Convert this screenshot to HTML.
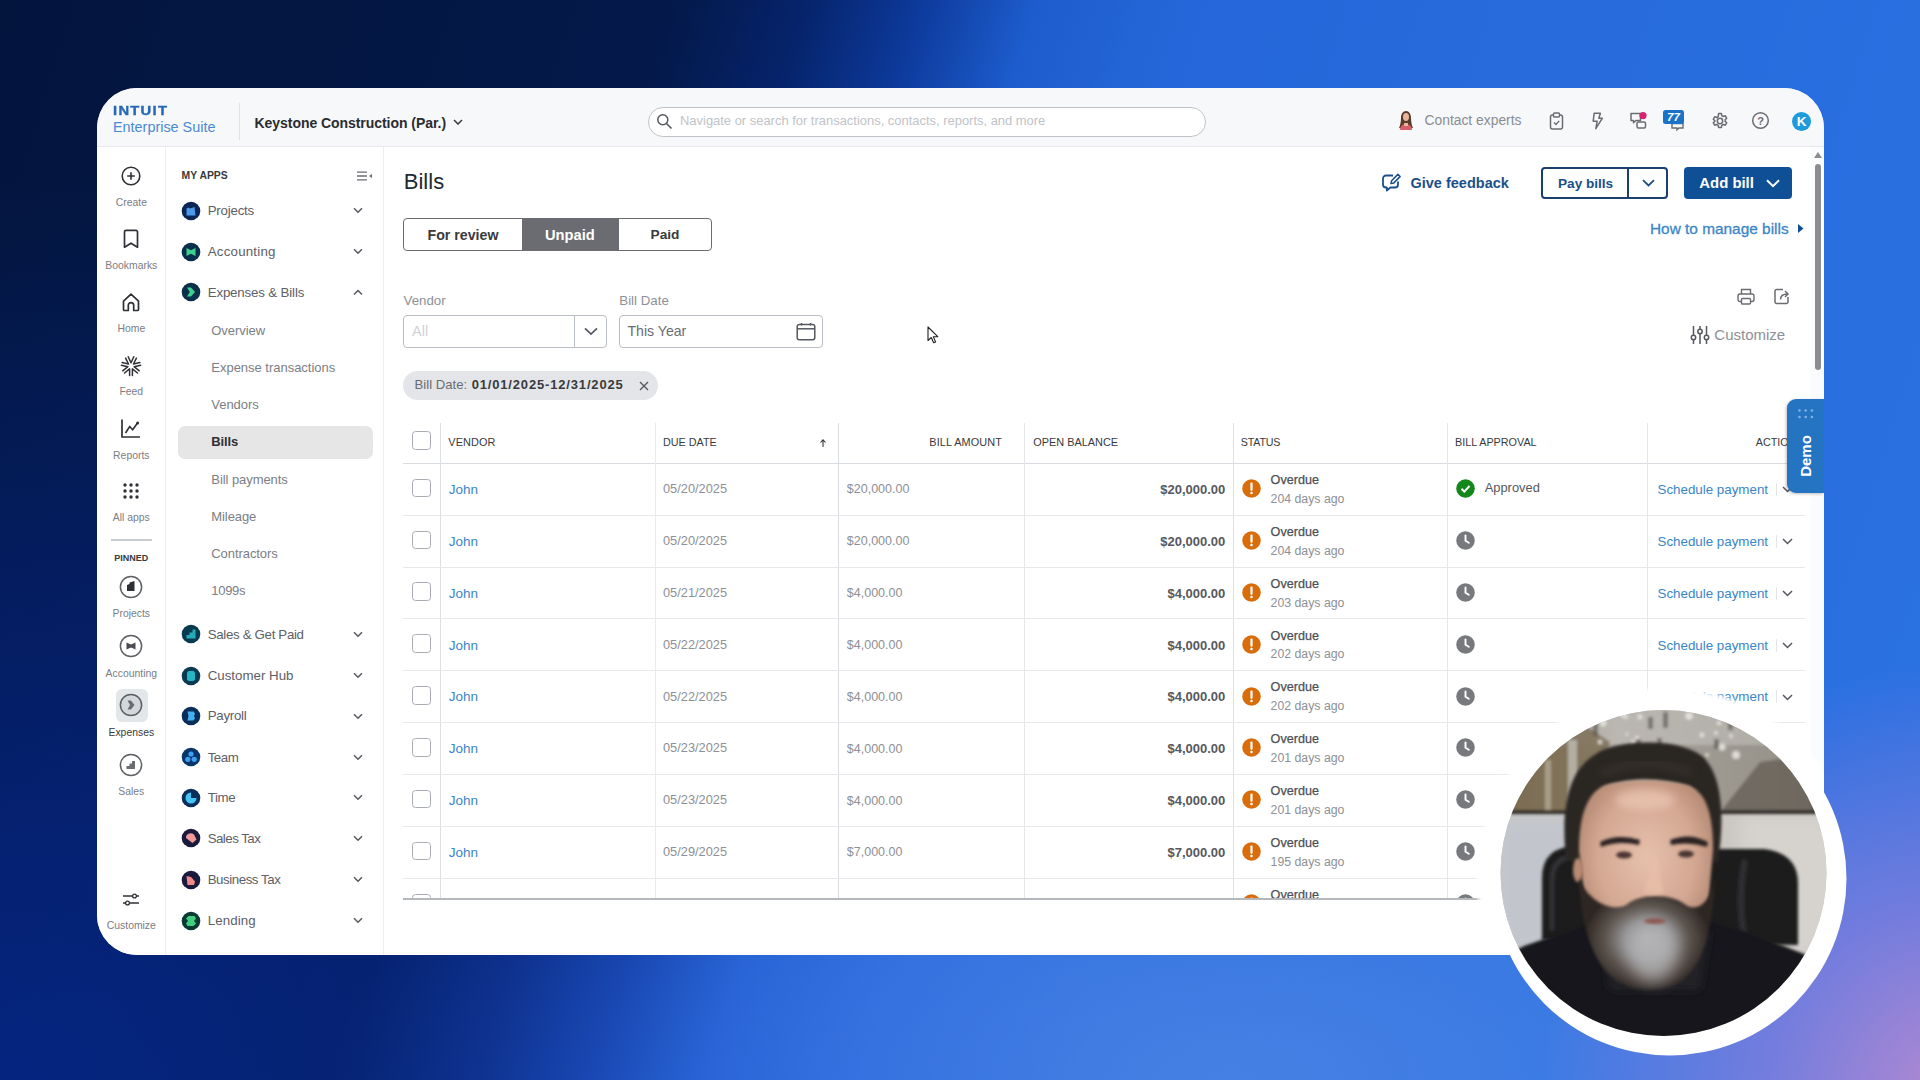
<!DOCTYPE html>
<html><head><meta charset="utf-8"><title>Bills</title>
<style>
*{box-sizing:border-box;margin:0;padding:0}
html,body{width:1920px;height:1080px;overflow:hidden}
body{font-family:"Liberation Sans",sans-serif;position:relative;
background:
radial-gradient(ellipse 420px 440px at 102% 102%,rgba(182,138,208,1) 0,rgba(150,128,218,.65) 45%,rgba(120,120,225,0) 100%),
radial-gradient(ellipse 900px 420px at 64% 100%,rgba(100,150,235,.5) 0,rgba(100,150,235,0) 100%),
radial-gradient(ellipse 1100px 900px at 0% 100%,rgba(8,60,235,.36) 0,rgba(8,60,235,.2) 50%,rgba(8,60,235,0) 100%),
linear-gradient(107deg,#03153d 0%,#04194a 30%,#06246c 36%,#0d3a9c 41%,#1d5ccc 46%,#2567da 53%,#2b72e3 100%);}
.win *{position:absolute}
.win{position:absolute;left:97px;top:88px;width:1727px;height:867px;background:#fff;border-radius:40px;overflow:hidden}
.t{white-space:nowrap;line-height:1}
</style></head><body>
<div class="win">
<div style="left:0px;top:0px;width:1727px;height:59px;background:#f6f8fa;border-bottom:1px solid #e6e8ec"></div>
<div class="t" style="left:16px;top:16.6px;font-size:12.6px;font-weight:700;color:#2668b8;letter-spacing:1.1px;transform:scaleX(1.17);transform-origin:0 0;-webkit-text-stroke:.35px #2668b8">INTUIT</div>
<div class="t" style="left:16px;top:31.8px;font-size:14.4px;color:#4a8ad4;">Enterprise Suite</div>
<div style="left:142px;top:15px;width:1px;height:37px;background:#dfe2e6"></div>
<div class="t" style="left:157.5px;top:28.1px;font-size:14px;font-weight:700;color:#2a2c30;letter-spacing:-.05px">Keystone Construction (Par.)</div>
<svg style="left:356.2px;top:31.2px" width="10" height="6" viewBox="0 0 10 6"><path d="M1 1l4 4 4-4" fill="none" stroke="#393a3d" stroke-width="1.500"/></svg>
<div style="left:551px;top:19px;width:558px;height:30px;border:1px solid #bfc3c9;border-radius:15px;background:#fff"></div>
<svg style="left:559.0px;top:25.0px" width="17" height="17" viewBox="0 0 17 17"><circle cx="6.800" cy="6.800" r="5" fill="none" stroke="#55585e" stroke-width="1.500"/><path d="M10.500 10.500l5 5" stroke="#55585e" stroke-width="1.600"/></svg>
<div class="t" style="left:583px;top:26.5px;font-size:12.95px;color:#c0c3c8;">Navigate or search for transactions, contacts, reports, and more</div>
<svg style="left:1300.0px;top:21.0px" width="18" height="22" viewBox="0 0 18 22"><path d="M4 9c0-4 2-7 5-7s5 3 5 7c0 4 1 8 2 10H2c1-2 2-6 2-10z" fill="#5a3a2a"/><ellipse cx="9" cy="8" rx="3" ry="4" fill="#e7b79c"/><path d="M3 21c0-4 3-6 6-6s6 2 6 6z" fill="#d85f6a"/><path d="M7 14h4v3H7z" fill="#e7b79c"/></svg>
<div class="t" style="left:1327.5px;top:25.5px;font-size:13.85px;color:#8a8d93;">Contact experts</div>
<svg style="left:1452.0px;top:24.0px" width="15" height="18" viewBox="0 0 15 18"><rect x="1.500" y="3" width="12" height="14" rx="2" fill="none" stroke="#6b6c72" stroke-width="1.500"/><rect x="4.500" y="1" width="6" height="4" rx="1" fill="#f5f7fa" stroke="#6b6c72" stroke-width="1.400"/><path d="M5 10.500l2 2 3.200-3.600" fill="none" stroke="#6b6c72" stroke-width="1.400"/></svg>
<svg style="left:1494.0px;top:23.5px" width="13" height="18" viewBox="0 0 13 18"><path d="M3.200 1.200h6.200l-1.600 5h3.600l-6.600 10.400 1.400-7.400H2.200z" fill="none" stroke="#6b6c72" stroke-width="1.500" stroke-linejoin="round"/></svg>
<svg style="left:1532.0px;top:22.0px" width="20" height="20" viewBox="0 0 20 20"><path d="M2 3.500h9.500v7H7l-2.500 2.200V10.500H2z" fill="none" stroke="#6b6c72" stroke-width="1.500" stroke-linejoin="round"/><rect x="8" y="12" width="8.500" height="6" rx="1.500" fill="#f5f7fa" stroke="#6b6c72" stroke-width="1.500"/><circle cx="14" cy="5.600" r="3.600" fill="#d6246e"/></svg>
<svg style="left:1566.0px;top:21.0px" width="24" height="22" viewBox="0 0 24 22"><path d="M9 14.500h11v4.500h-4l-2 1.800V19H9z" fill="none" stroke="#6b6c72" stroke-width="1.400"/><rect x="0" y="1" width="21" height="14" rx="2.500" fill="#1a73c8"/><text x="10.500" y="12" font-family="Liberation Sans" font-size="11.500" font-weight="700" font-style="italic" fill="#fff" text-anchor="middle">77</text></svg>
<svg style="left:1613.5px;top:23.5px" width="18" height="18" viewBox="0 0 18 18"><g fill="none" stroke="#6b6c72" stroke-width="1.500"><circle cx="9" cy="9" r="2.700"/><path d="M7.600 1.600h2.800l.4 2 1.500.9 2-.7 1.400 2.400-1.500 1.400v1.800l1.500 1.400-1.400 2.400-2-.7-1.500.9-.4 2H7.600l-.4-2-1.500-.9-2 .7-1.400-2.400 1.500-1.400V8.600L2.300 7.200l1.400-2.400 2 .7 1.500-.9z" stroke-linejoin="round"/></g></svg>
<svg style="left:1654.0px;top:23.0px" width="19" height="19" viewBox="0 0 19 19"><circle cx="9.500" cy="9.500" r="7.800" fill="none" stroke="#6b6c72" stroke-width="1.500"/><text x="9.500" y="13.500" font-family="Liberation Sans" font-size="11" font-weight="700" fill="#6b6c72" text-anchor="middle">?</text></svg>
<div style="left:1695px;top:23.5px;width:19px;height:19.0px;border-radius:50%;background:#1d9bdb"></div>
<div class="t" style="left:1504.5px;width:400px;text-align:center;top:26.5px;font-size:13.5px;font-weight:700;color:#fff;">K</div>
<div style="left:0px;top:59px;width:69px;height:808px;border-right:1px solid #eceef1;background:#fff"></div>
<svg style="left:23.0px;top:77.0px" width="22" height="22" viewBox="0 0 22 22"><circle cx="11" cy="11" r="8.800" fill="none" stroke="#2e3035" stroke-width="1.600"/><path d="M11 7.200v7.600M7.200 11h7.600" stroke="#2e3035" stroke-width="1.600"/></svg>
<div class="t" style="left:-165.7px;width:400px;text-align:center;top:109.6px;font-size:10.4px;color:#7a7d83;">Create</div>
<svg style="left:25.0px;top:141.0px" width="18" height="20" viewBox="0 0 18 20"><path d="M2.500 2.800a1.500 1.500 0 0 1 1.500-1.500h10a1.500 1.500 0 0 1 1.500 1.500v15.400l-6.500-4-6.500 4z" fill="none" stroke="#2e3035" stroke-width="1.700" stroke-linejoin="round"/></svg>
<div class="t" style="left:-165.7px;width:400px;text-align:center;top:172.8px;font-size:10.4px;color:#7a7d83;">Bookmarks</div>
<svg style="left:24.0px;top:204.3px" width="20" height="20" viewBox="0 0 20 20"><path d="M2.500 9.200 10 2.200l7.500 7v8.300a1 1 0 0 1-1 1h-3.800v-5.200a2.700 2.700 0 0 0-5.400 0v5.200H3.500a1 1 0 0 1-1-1z" fill="none" stroke="#2e3035" stroke-width="1.700" stroke-linejoin="round"/></svg>
<div class="t" style="left:-165.7px;width:400px;text-align:center;top:236.0px;font-size:10.4px;color:#7a7d83;">Home</div>
<svg style="left:23.0px;top:266.5px" width="22" height="22" viewBox="0 0 22 22"><path d="M8.2 1.8L11.0 7.8M13.8 1.8L11.0 7.8M16.4 3.1L13.5 9.0M19.9 7.5L13.5 9.0M20.6 10.3L14.1 11.7M19.3 15.8L14.1 11.7M17.5 18.0L12.4 13.9M12.4 20.5L12.4 13.9M9.6 20.5L9.6 13.9M4.5 18.0L9.6 13.9M2.7 15.8L7.9 11.7M1.4 10.3L7.9 11.7M2.1 7.5L8.5 9.0M5.6 3.1L8.5 9.0" fill="none" stroke="#2e3035" stroke-width="1.500" stroke-linecap="round"/></svg>
<div class="t" style="left:-165.7px;width:400px;text-align:center;top:299.0px;font-size:10.4px;color:#7a7d83;">Feed</div>
<svg style="left:23.0px;top:329.8px" width="22" height="21" viewBox="0 0 22 21"><path d="M2 1.500v17.500h18" fill="none" stroke="#2e3035" stroke-width="1.700"/><path d="M5.500 15l4.200-6.500 3 3.300 4.600-6.600" fill="none" stroke="#2e3035" stroke-width="1.600"/><circle cx="17.600" cy="5" r="1.500" fill="#2e3035"/></svg>
<div class="t" style="left:-165.7px;width:400px;text-align:center;top:362.6px;font-size:10.4px;color:#7a7d83;">Reports</div>
<svg style="left:26.4px;top:395.2px" width="16" height="16" viewBox="0 0 16 16"><circle cx="2" cy="2" r="1.700" fill="#2e3035"/><circle cx="2" cy="8" r="1.700" fill="#2e3035"/><circle cx="2" cy="14" r="1.700" fill="#2e3035"/><circle cx="8" cy="2" r="1.700" fill="#2e3035"/><circle cx="8" cy="8" r="1.700" fill="#2e3035"/><circle cx="8" cy="14" r="1.700" fill="#2e3035"/><circle cx="14" cy="2" r="1.700" fill="#2e3035"/><circle cx="14" cy="8" r="1.700" fill="#2e3035"/><circle cx="14" cy="14" r="1.700" fill="#2e3035"/></svg>
<div class="t" style="left:-165.7px;width:400px;text-align:center;top:425.0px;font-size:10.4px;color:#7a7d83;">All apps</div>
<div style="left:14px;top:451px;width:41px;height:1.5px;background:#c9ccd1"></div>
<div class="t" style="left:-165.7px;width:400px;text-align:center;top:465.6px;font-size:9px;font-weight:700;color:#393a3d;">PINNED</div>
<svg style="left:22.2px;top:487.0px" width="24" height="24" viewBox="0 0 24 24"><circle cx="12" cy="12" r="10.600" fill="#fff" stroke="#5d5f64" stroke-width="1.500"/><path d="M8 10l2.500-1v-1.500l5-1.500v10H8z" fill="#2e3035"/></svg>
<div class="t" style="left:-165.7px;width:400px;text-align:center;top:520.7px;font-size:10.4px;color:#7a7d83;">Projects</div>
<svg style="left:22.2px;top:546.0px" width="24" height="24" viewBox="0 0 24 24"><circle cx="12" cy="12" r="10.600" fill="#fff" stroke="#5d5f64" stroke-width="1.500"/><path d="M7.500 8.500l4.500 2 4.500-2v7l-4.500-2-4.500 2z" fill="#4a4c51"/></svg>
<div class="t" style="left:-165.7px;width:400px;text-align:center;top:580.5px;font-size:10.4px;color:#7a7d83;">Accounting</div>
<div style="left:18.5px;top:600.6px;width:32.0px;height:33.0px;border-radius:6px;background:#e4e7ea"></div><svg style="left:22.2px;top:605.0px" width="24" height="24" viewBox="0 0 24 24"><circle cx="12" cy="12" r="10.600" fill="#d5d8db" stroke="#5d5f64" stroke-width="1.500"/><path d="M8.500 7.500h3.500l3.500 4.500-3.500 4.500H8.500l2.500-4.500z" fill="#6b6c72"/></svg>
<div class="t" style="left:-165.7px;width:400px;text-align:center;top:639.5px;font-size:10.4px;color:#393a3d;">Expenses</div>
<svg style="left:22.2px;top:665.0px" width="24" height="24" viewBox="0 0 24 24"><circle cx="12" cy="12" r="10.600" fill="#fff" stroke="#5d5f64" stroke-width="1.500"/><path d="M7.500 16v-3h3v-2.500h2.500V8h3v8z" fill="#6b6c72"/></svg>
<div class="t" style="left:-165.7px;width:400px;text-align:center;top:699.0px;font-size:10.4px;color:#7a7d83;">Sales</div>
<svg style="left:25.0px;top:804.8px" width="18" height="13" viewBox="0 0 18 13"><path d="M1 3h16M1 10h16" stroke="#2e3035" stroke-width="1.300"/><circle cx="12.500" cy="3" r="1.900" fill="#fff" stroke="#2e3035" stroke-width="1.300"/><circle cx="5.500" cy="10" r="1.900" fill="#fff" stroke="#2e3035" stroke-width="1.300"/></svg>
<div class="t" style="left:-165.7px;width:400px;text-align:center;top:832.8px;font-size:10.4px;color:#7a7d83;">Customize</div>
<div style="left:69px;top:59px;width:218px;height:808px;border-right:1px solid #eceef1;background:#fff"></div>
<div class="t" style="left:84.5px;top:83.1px;font-size:10.4px;font-weight:700;color:#393a3d;">MY APPS</div>
<svg style="left:259.5px;top:82.8px" width="16" height="10" viewBox="0 0 16 10"><path d="M0 1.200h10M0 5h10M0 8.800h10" stroke="#6b6c72" stroke-width="1.300"/><path d="M15 3v4l-3-2z" fill="#6b6c72"/></svg>
<svg style="left:83.7px;top:112.5px" width="20" height="20" viewBox="0 0 20 20"><circle cx="10" cy="10" r="9.300" fill="#0b2554"/><path d="M5.500 7.500l2-1 1.500 1 4.500-1.500 1 8.500H5.500z" fill="#4b9bea"/></svg><div class="t" style="left:110.7px;top:116.0px;font-size:13.3px;color:#5d6066;letter-spacing:-0.21px;">Projects</div><svg style="left:255.8px;top:119.2px" width="10" height="7" viewBox="0 0 10 7"><path d="M1 1.200l4 4 4-4" fill="none" stroke="#55585e" stroke-width="1.500"/></svg>
<svg style="left:83.7px;top:153.5px" width="20" height="20" viewBox="0 0 20 20"><circle cx="10" cy="10" r="9.300" fill="#0a2f4a"/><path d="M5.500 6l4.500 2.200L14.500 6v8L10 11.800 5.500 14z" fill="#3fcf8e"/></svg><div class="t" style="left:110.7px;top:157.0px;font-size:13.3px;color:#5d6066;letter-spacing:0.22px;">Accounting</div><svg style="left:255.8px;top:160.2px" width="10" height="7" viewBox="0 0 10 7"><path d="M1 1.200l4 4 4-4" fill="none" stroke="#55585e" stroke-width="1.500"/></svg>
<svg style="left:83.7px;top:194.3px" width="20" height="20" viewBox="0 0 20 20"><circle cx="10" cy="10" r="9.300" fill="#0a2f4a"/><path d="M6 5.500h4l4 4.500-4 4.500H6l2.800-4.500z" fill="#3fcf8e"/></svg><div class="t" style="left:110.7px;top:197.8px;font-size:13.3px;color:#5d6066;letter-spacing:-0.16px;">Expenses &amp; Bills</div><svg style="left:255.8px;top:201.0px" width="10" height="7" viewBox="0 0 10 7"><path d="M1 5.500l4-4 4 4" fill="none" stroke="#55585e" stroke-width="1.500"/></svg>
<div class="t" style="left:114.3px;top:236.3px;font-size:13px;color:#7b7e84;letter-spacing:-0.04px;">Overview</div>
<div class="t" style="left:114.3px;top:273.3px;font-size:13px;color:#7b7e84;letter-spacing:-0.02px;">Expense transactions</div>
<div class="t" style="left:114.3px;top:310.3px;font-size:13px;color:#7b7e84;letter-spacing:-0.03px;">Vendors</div>
<div style="left:81px;top:338.4px;width:194.8px;height:32.4px;border-radius:7px;background:#e6e6e6"></div>
<div class="t" style="left:114.3px;top:347.3px;font-size:13px;font-weight:700;color:#2f3033;letter-spacing:-0.11px;">Bills</div>
<div class="t" style="left:114.3px;top:384.8px;font-size:13px;color:#7b7e84;letter-spacing:-0.07px;">Bill payments</div>
<div class="t" style="left:114.3px;top:422.0px;font-size:13px;color:#7b7e84;letter-spacing:-0.09px;">Mileage</div>
<div class="t" style="left:114.3px;top:458.8px;font-size:13px;color:#7b7e84;letter-spacing:-0.07px;">Contractors</div>
<div class="t" style="left:114.3px;top:496.2px;font-size:13px;color:#7b7e84;letter-spacing:-0.31px;">1099s</div>
<svg style="left:83.7px;top:536.3px" width="20" height="20" viewBox="0 0 20 20"><circle cx="10" cy="10" r="9.300" fill="#083a50"/><path d="M5.500 14.500v-3.500h3V8.500h3V5.500h3v9z" fill="#2aa9b9"/></svg><div class="t" style="left:110.7px;top:539.8px;font-size:13.3px;color:#5d6066;letter-spacing:-0.33px;">Sales &amp; Get Paid</div><svg style="left:255.8px;top:543.0px" width="10" height="7" viewBox="0 0 10 7"><path d="M1 1.200l4 4 4-4" fill="none" stroke="#55585e" stroke-width="1.500"/></svg>
<svg style="left:83.7px;top:577.6px" width="20" height="20" viewBox="0 0 20 20"><circle cx="10" cy="10" r="9.300" fill="#0a3a52"/><path d="M6 6.500l1.500-1.500h5L14 6.500v7L12.500 15h-5L6 13.500z" fill="#25b5c5"/></svg><div class="t" style="left:110.7px;top:581.1px;font-size:13.3px;color:#5d6066;letter-spacing:0.01px;">Customer Hub</div><svg style="left:255.8px;top:584.3px" width="10" height="7" viewBox="0 0 10 7"><path d="M1 1.200l4 4 4-4" fill="none" stroke="#55585e" stroke-width="1.500"/></svg>
<svg style="left:83.7px;top:617.8px" width="20" height="20" viewBox="0 0 20 20"><circle cx="10" cy="10" r="9.300" fill="#0a2e5a"/><path d="M6.500 5.500h6l1.500 2-1 2.500 1 2.500-1.500 2h-6l1-4.500z" fill="#45b0f0"/></svg><div class="t" style="left:110.7px;top:621.3px;font-size:13.3px;color:#5d6066;letter-spacing:-0.28px;">Payroll</div><svg style="left:255.8px;top:624.5px" width="10" height="7" viewBox="0 0 10 7"><path d="M1 1.200l4 4 4-4" fill="none" stroke="#55585e" stroke-width="1.500"/></svg>
<svg style="left:83.7px;top:659.0px" width="20" height="20" viewBox="0 0 20 20"><circle cx="10" cy="10" r="9.300" fill="#0a356a"/><circle cx="10" cy="7" r="2.600" fill="#3ea0f0"/><circle cx="6.800" cy="12.300" r="2.600" fill="#3ea0f0"/><circle cx="13.200" cy="12.300" r="2.600" fill="#3ea0f0"/></svg><div class="t" style="left:110.7px;top:662.5px;font-size:13.3px;color:#5d6066;letter-spacing:-0.47px;">Team</div><svg style="left:255.8px;top:665.7px" width="10" height="7" viewBox="0 0 10 7"><path d="M1 1.200l4 4 4-4" fill="none" stroke="#55585e" stroke-width="1.500"/></svg>
<svg style="left:83.7px;top:699.7px" width="20" height="20" viewBox="0 0 20 20"><circle cx="10" cy="10" r="9.300" fill="#0a2e5a"/><path d="M10 4.500v5.500h5.500a5.500 5.500 0 1 1-5.500-5.500z" fill="#45c5f5"/></svg><div class="t" style="left:110.7px;top:703.2px;font-size:13.3px;color:#5d6066;letter-spacing:-0.39px;">Time</div><svg style="left:255.8px;top:706.4px" width="10" height="7" viewBox="0 0 10 7"><path d="M1 1.200l4 4 4-4" fill="none" stroke="#55585e" stroke-width="1.500"/></svg>
<svg style="left:83.7px;top:740.2px" width="20" height="20" viewBox="0 0 20 20"><circle cx="10" cy="10" r="9.300" fill="#1a1a3c"/><path d="M5 10a5 4.500 20 0 1 8-3.500l2.500 5-4 3.500z" fill="#f09a9a"/></svg><div class="t" style="left:110.7px;top:743.7px;font-size:13.3px;color:#5d6066;letter-spacing:-0.54px;">Sales Tax</div><svg style="left:255.8px;top:746.9px" width="10" height="7" viewBox="0 0 10 7"><path d="M1 1.200l4 4 4-4" fill="none" stroke="#55585e" stroke-width="1.500"/></svg>
<svg style="left:83.7px;top:781.6px" width="20" height="20" viewBox="0 0 20 20"><circle cx="10" cy="10" r="9.300" fill="#1a1a3c"/><path d="M5.500 6l4.500 1 4 4.500-1 3.500H6.500z" fill="#f08a8a"/></svg><div class="t" style="left:110.7px;top:785.1px;font-size:13.3px;color:#5d6066;letter-spacing:-0.45px;">Business Tax</div><svg style="left:255.8px;top:788.3px" width="10" height="7" viewBox="0 0 10 7"><path d="M1 1.200l4 4 4-4" fill="none" stroke="#55585e" stroke-width="1.500"/></svg>
<svg style="left:83.7px;top:822.5px" width="20" height="20" viewBox="0 0 20 20"><circle cx="10" cy="10" r="9.300" fill="#0a3a34"/><path d="M5 7.500l2.500-2.500h6l1.500 2.500-2 2.500 2 2.500-2.500 2.500h-6L5 12.500l2-2.500z" fill="#3fcf7e"/></svg><div class="t" style="left:110.7px;top:826.0px;font-size:13.3px;color:#5d6066;letter-spacing:0.11px;">Lending</div><svg style="left:255.8px;top:829.2px" width="10" height="7" viewBox="0 0 10 7"><path d="M1 1.200l4 4 4-4" fill="none" stroke="#55585e" stroke-width="1.500"/></svg>
<div class="t" style="left:306.8px;top:83.4px;font-size:22px;color:#1f2933;">Bills</div>
<svg style="left:1284.0px;top:85.0px" width="21" height="19" viewBox="0 0 21 19"><path d="M12 2.500H5a3 3 0 0 0-3 3v6a3 3 0 0 0 3 3h.800v3l3.600-3H14a3 3 0 0 0 3-3V8.500" fill="none" stroke="#1b4f8a" stroke-width="1.800" stroke-linejoin="round"/><path d="M10 10.500l.600-2.800 6.300-6.300 2.200 2.200-6.300 6.300z" fill="none" stroke="#1b4f8a" stroke-width="1.500" stroke-linejoin="round"/></svg>
<div class="t" style="left:1313.5px;top:87.7px;font-size:14.5px;font-weight:700;color:#1b4f8a;">Give feedback</div>
<div style="left:1444px;top:79px;width:126.5px;height:31.8px;border:2px solid #1d3f70;border-radius:4px;background:#fff"></div>
<div style="left:1530px;top:79px;width:2px;height:31.8px;background:#1d3f70"></div>
<div class="t" style="left:1461px;top:88.5px;font-size:13.6px;font-weight:700;color:#1b4f8a;">Pay bills</div>
<svg style="left:1544.5px;top:91.0px" width="13" height="8" viewBox="0 0 13 8"><path d="M1 1.200l5.500 5.300L12 1.200" fill="none" stroke="#1b4f8a" stroke-width="1.800"/></svg>
<div style="left:1586.5px;top:78.8px;width:108.8px;height:32.2px;border-radius:4px;background:#0f4f96"></div>
<div class="t" style="left:1602.3px;top:87.9px;font-size:14.9px;font-weight:700;color:#fff;">Add bill</div>
<svg style="left:1668.8px;top:90.5px" width="14" height="9" viewBox="0 0 14 9"><path d="M1 1.300l6 5.800 6-5.800" fill="none" stroke="#fff" stroke-width="2"/></svg>
<div class="t" style="left:1553px;top:133.3px;font-size:15.4px;color:#3a86c8;-webkit-text-stroke:.3px #3a86c8">How to manage bills</div>
<svg style="left:1700.5px;top:136.3px" width="6" height="9" viewBox="0 0 6 9"><path d="M0 0l5.500 4.500L0 9z" fill="#0f4f96"/></svg>
<div style="left:306.2px;top:130.2px;width:308.6px;height:33.1px;border:1.500px solid #6b6c72;border-radius:4px;background:#fff"></div>
<div style="left:424.5px;top:130.2px;width:97.0px;height:33.1px;background:#6b6c72"></div>
<div class="t" style="left:330.5px;top:140.0px;font-size:14.2px;font-weight:700;color:#393a3d;">For review</div>
<div class="t" style="left:448px;top:139.6px;font-size:14.7px;font-weight:700;color:#fff;">Unpaid</div>
<div class="t" style="left:553.5px;top:140.4px;font-size:13.7px;font-weight:700;color:#393a3d;">Paid</div>
<div class="t" style="left:306.5px;top:206.4px;font-size:13.3px;color:#8d9096;">Vendor</div>
<div class="t" style="left:522.3px;top:206.4px;font-size:13.3px;color:#8d9096;">Bill Date</div>
<div style="left:306.2px;top:227px;width:204.0px;height:32.7px;border:1px solid #babec5;border-radius:4px;background:#fff"></div>
<div style="left:477.2px;top:227px;width:1.0px;height:32.7px;background:#babec5"></div>
<div class="t" style="left:315px;top:236.0px;font-size:14.5px;color:#d0d3d8;">All</div>
<svg style="left:487.0px;top:238.8px" width="14" height="9" viewBox="0 0 14 9"><path d="M1 1.300l6 5.800 6-5.800" fill="none" stroke="#55585e" stroke-width="1.700"/></svg>
<div style="left:521.7px;top:227px;width:204.6px;height:32.7px;border:1px solid #babec5;border-radius:4px;background:#fff"></div>
<div class="t" style="left:530.5px;top:236.4px;font-size:14.1px;color:#6b6c72;">This Year</div>
<svg style="left:699.4px;top:233.5px" width="20" height="19" viewBox="0 0 20 19"><rect x="1.200" y="2.500" width="17.600" height="15.300" rx="2.200" fill="none" stroke="#55585e" stroke-width="1.500"/><path d="M1.200 6.800h17.600" stroke="#55585e" stroke-width="1.500"/><path d="M5.500 1v2.500M14.500 1v2.500" stroke="#55585e" stroke-width="1.500"/></svg>
<div style="left:306.2px;top:282.5px;width:255.1px;height:29.5px;border-radius:15px;background:#e3e5e8"></div>
<div class="t" style="left:317.5px;top:290.2px;font-size:13.2px;color:#6b6c72;">Bill Date:</div>
<div class="t" style="left:374.7px;top:290.4px;font-size:13px;font-weight:700;color:#393a3d;letter-spacing:.83px">01/01/2025-12/31/2025</div>
<svg style="left:542.3px;top:292.5px" width="10" height="10" viewBox="0 0 10 10"><path d="M1 1l8 8M9 1l-8 8" stroke="#55585e" stroke-width="1.400"/></svg>
<svg style="left:829.5px;top:237.5px" width="13" height="18" viewBox="0 0 13 18"><path d="M1 1v13.500l3.300-3 2.300 5.300 2-.900-2.300-5.200h4.500z" fill="#fff" stroke="#222" stroke-width="1.100" stroke-linejoin="round"/></svg>
<svg style="left:1639.5px;top:200.0px" width="18" height="17" viewBox="0 0 18 17"><g fill="none" stroke="#6b6c72" stroke-width="1.400"><path d="M4.500 6V1.500h9V6"/><rect x="1" y="6" width="16" height="7.500" rx="2"/><rect x="4.500" y="10.500" width="9" height="5.500" rx="1" fill="#fff"/></g></svg>
<svg style="left:1677.3px;top:200.0px" width="16" height="17" viewBox="0 0 16 17"><g fill="none" stroke="#6b6c72" stroke-width="1.500"><path d="M14 9v5a1.500 1.500 0 0 1-1.500 1.500h-10A1.500 1.500 0 0 1 1 14V3a1.500 1.500 0 0 1 1.500-1.500H9"/><path d="M6.500 11.500c0-3.500 2.500-5.500 7-5.500M11 3l3 3-3 3"/></g></svg>
<svg style="left:1592.5px;top:238.3px" width="20" height="18" viewBox="0 0 20 18"><g stroke="#55585e" stroke-width="1.500" fill="#fff"><path d="M3.500 0v18M10 0v18M16.500 0v18"/><circle cx="3.500" cy="11.500" r="2.200"/><circle cx="10" cy="5.500" r="2.200"/><circle cx="16.500" cy="11.500" r="2.200"/></g></svg>
<div class="t" style="left:1617.3px;top:239.3px;font-size:15px;color:#8d9096;">Customize</div>
<div style="left:1714px;top:59px;width:13px;height:808px;background:#fafbfc"></div>
<svg style="left:1716.8px;top:64.2px" width="8" height="6" viewBox="0 0 8 6"><path d="M0 6L4 0 8 6z" fill="#8a8c90"/></svg>
<div style="left:1717.8px;top:75.5px;width:6.0px;height:206.0px;border-radius:3px;background:#8a8c90"></div>
<div style="left:0;top:0;width:1727px;height:810.3px;overflow:hidden"><div style="left:306px;top:375px;width:1402px;height:1.2px;background:#d9dce0"></div>
<div style="left:343.0px;top:335px;width:1.0px;height:477px;background:#dcdfe3"></div>
<div style="left:558.0px;top:335px;width:1.0px;height:477px;background:#e9ebee"></div>
<div style="left:740.8px;top:335px;width:1.0px;height:477px;background:#d9dce0"></div>
<div style="left:927.0px;top:335px;width:1.0px;height:477px;background:#e4e6ea"></div>
<div style="left:1135.5px;top:335px;width:1.0px;height:477px;background:#dcdfe3"></div>
<div style="left:1349.5px;top:335px;width:1.0px;height:477px;background:#e4e6ea"></div>
<div style="left:1549.5px;top:335px;width:1.0px;height:477px;background:#e4e6ea"></div>
<div style="left:315px;top:343.1px;width:19.3px;height:18.6px;border:1px solid #a9adb3;border-radius:3.500px;background:#fff"></div>
<div class="t" style="left:351.3px;top:348.5px;font-size:10.9px;color:#393a3d;letter-spacing:.1px">VENDOR</div>
<div class="t" style="left:566px;top:348.6px;font-size:10.8px;color:#393a3d;">DUE DATE</div>
<svg style="left:723.3px;top:350.6px" width="6" height="8" viewBox="0 0 6 8"><path d="M3 8V1M.500 3.500L3 .800l2.500 2.700" fill="none" stroke="#393a3d" stroke-width="1.100"/></svg>
<div class="t" style="right:822px;top:348.5px;font-size:10.9px;color:#393a3d;letter-spacing:.1px">BILL AMOUNT</div>
<div class="t" style="left:936.3px;top:348.5px;font-size:10.9px;color:#393a3d;">OPEN BALANCE</div>
<div class="t" style="left:1143.8px;top:348.6px;font-size:10.7px;color:#393a3d;letter-spacing:-.2px">STATUS</div>
<div class="t" style="left:1358px;top:348.6px;font-size:10.8px;color:#393a3d;">BILL APPROVAL</div>
<div class="t" style="left:1658.7px;top:348.6px;font-size:10.8px;color:#393a3d;">ACTION</div>
<div style="left:306px;top:426.7px;width:1402px;height:1.0px;background:#e6e8eb"></div>
<div style="left:315px;top:390.7px;width:19.3px;height:18.6px;border:1px solid #a9adb3;border-radius:3.500px;background:#fff"></div>
<div class="t" style="left:351.8px;top:394.9px;font-size:13.5px;color:#3a86c8;">John</div>
<div class="t" style="left:566px;top:395.2px;font-size:12.8px;color:#8d9096;">05/20/2025</div>
<div class="t" style="left:749.8px;top:395.4px;font-size:12.5px;color:#8d9096;">$20,000.00</div>
<div class="t" style="right:598.7px;top:395.0px;font-size:13px;font-weight:700;color:#55585e;">$20,000.00</div>
<svg style="left:1144.8px;top:391.2px" width="19" height="19" viewBox="0 0 19 19"><circle cx="9.500" cy="9.500" r="9.300" fill="#d96d0c"/><path d="M9.500 4.500v6.300" stroke="#fff" stroke-width="2.200" stroke-linecap="round"/><circle cx="9.500" cy="14" r="1.300" fill="#fff"/></svg>
<div class="t" style="left:1173.6px;top:385.9px;font-size:12.6px;color:#4d5056;-webkit-text-stroke:.25px #4d5056">Overdue</div>
<div class="t" style="left:1173.6px;top:404.8px;font-size:12.3px;color:#8d9096;">204 days ago</div>
<svg style="left:1358.8px;top:391.2px" width="19" height="19" viewBox="0 0 19 19"><circle cx="9.500" cy="9.500" r="9.300" fill="#14871a"/><path d="M5.500 9.800l2.800 2.800 5.200-5.600" fill="none" stroke="#fff" stroke-width="2"/></svg>
<div class="t" style="left:1387.7px;top:393.6px;font-size:12.9px;color:#55585e;">Approved</div>
<div class="t" style="left:1560.5px;top:395.0px;font-size:13.35px;color:#3a86c8;">Schedule payment</div>
<div style="left:1678.7px;top:394.9px;width:0.8px;height:13.0px;background:#e4e6ea"></div>
<svg style="left:1685.3px;top:398.2px" width="11" height="7" viewBox="0 0 11 7"><path d="M1 1l4.500 4.500L10 1" fill="none" stroke="#55585e" stroke-width="1.500"/></svg>
<div style="left:306px;top:478.5px;width:1402px;height:1.0px;background:#e6e8eb"></div>
<div style="left:315px;top:442.6px;width:19.3px;height:18.6px;border:1px solid #a9adb3;border-radius:3.500px;background:#fff"></div>
<div class="t" style="left:351.8px;top:446.7px;font-size:13.5px;color:#3a86c8;">John</div>
<div class="t" style="left:566px;top:447.1px;font-size:12.8px;color:#8d9096;">05/20/2025</div>
<div class="t" style="left:749.8px;top:447.3px;font-size:12.5px;color:#8d9096;">$20,000.00</div>
<div class="t" style="right:598.7px;top:446.9px;font-size:13px;font-weight:700;color:#55585e;">$20,000.00</div>
<svg style="left:1144.8px;top:443.0px" width="19" height="19" viewBox="0 0 19 19"><circle cx="9.500" cy="9.500" r="9.300" fill="#d96d0c"/><path d="M9.500 4.500v6.300" stroke="#fff" stroke-width="2.200" stroke-linecap="round"/><circle cx="9.500" cy="14" r="1.300" fill="#fff"/></svg>
<div class="t" style="left:1173.6px;top:437.8px;font-size:12.6px;color:#4d5056;-webkit-text-stroke:.25px #4d5056">Overdue</div>
<div class="t" style="left:1173.6px;top:456.6px;font-size:12.3px;color:#8d9096;">204 days ago</div>
<svg style="left:1358.8px;top:443.0px" width="19" height="19" viewBox="0 0 19 19"><circle cx="9.500" cy="9.500" r="9.300" fill="#77797d"/><path d="M9.500 4.500v5.300l3.300 2" fill="none" stroke="#fff" stroke-width="1.900" stroke-linecap="round"/></svg>
<div class="t" style="left:1560.5px;top:446.8px;font-size:13.35px;color:#3a86c8;">Schedule payment</div>
<div style="left:1678.7px;top:446.8px;width:0.8px;height:13.0px;background:#e4e6ea"></div>
<svg style="left:1685.3px;top:450.0px" width="11" height="7" viewBox="0 0 11 7"><path d="M1 1l4.500 4.500L10 1" fill="none" stroke="#55585e" stroke-width="1.500"/></svg>
<div style="left:306px;top:530.4px;width:1402px;height:1.0px;background:#e6e8eb"></div>
<div style="left:315px;top:494.4px;width:19.3px;height:18.6px;border:1px solid #a9adb3;border-radius:3.500px;background:#fff"></div>
<div class="t" style="left:351.8px;top:498.6px;font-size:13.5px;color:#3a86c8;">John</div>
<div class="t" style="left:566px;top:498.9px;font-size:12.8px;color:#8d9096;">05/21/2025</div>
<div class="t" style="left:749.8px;top:499.1px;font-size:12.5px;color:#8d9096;">$4,000.00</div>
<div class="t" style="right:598.7px;top:498.7px;font-size:13px;font-weight:700;color:#55585e;">$4,000.00</div>
<svg style="left:1144.8px;top:494.9px" width="19" height="19" viewBox="0 0 19 19"><circle cx="9.500" cy="9.500" r="9.300" fill="#d96d0c"/><path d="M9.500 4.500v6.300" stroke="#fff" stroke-width="2.200" stroke-linecap="round"/><circle cx="9.500" cy="14" r="1.300" fill="#fff"/></svg>
<div class="t" style="left:1173.6px;top:489.6px;font-size:12.6px;color:#4d5056;-webkit-text-stroke:.25px #4d5056">Overdue</div>
<div class="t" style="left:1173.6px;top:508.5px;font-size:12.3px;color:#8d9096;">203 days ago</div>
<svg style="left:1358.8px;top:494.9px" width="19" height="19" viewBox="0 0 19 19"><circle cx="9.500" cy="9.500" r="9.300" fill="#77797d"/><path d="M9.500 4.500v5.300l3.300 2" fill="none" stroke="#fff" stroke-width="1.900" stroke-linecap="round"/></svg>
<div class="t" style="left:1560.5px;top:498.7px;font-size:13.35px;color:#3a86c8;">Schedule payment</div>
<div style="left:1678.7px;top:498.6px;width:0.8px;height:13.0px;background:#e4e6ea"></div>
<svg style="left:1685.3px;top:501.9px" width="11" height="7" viewBox="0 0 11 7"><path d="M1 1l4.500 4.500L10 1" fill="none" stroke="#55585e" stroke-width="1.500"/></svg>
<div style="left:306px;top:582.2px;width:1402px;height:1.0px;background:#e6e8eb"></div>
<div style="left:315px;top:546.3px;width:19.3px;height:18.6px;border:1px solid #a9adb3;border-radius:3.500px;background:#fff"></div>
<div class="t" style="left:351.8px;top:550.5px;font-size:13.5px;color:#3a86c8;">John</div>
<div class="t" style="left:566px;top:550.8px;font-size:12.8px;color:#8d9096;">05/22/2025</div>
<div class="t" style="left:749.8px;top:551.0px;font-size:12.5px;color:#8d9096;">$4,000.00</div>
<div class="t" style="right:598.7px;top:550.6px;font-size:13px;font-weight:700;color:#55585e;">$4,000.00</div>
<svg style="left:1144.8px;top:546.8px" width="19" height="19" viewBox="0 0 19 19"><circle cx="9.500" cy="9.500" r="9.300" fill="#d96d0c"/><path d="M9.500 4.500v6.300" stroke="#fff" stroke-width="2.200" stroke-linecap="round"/><circle cx="9.500" cy="14" r="1.300" fill="#fff"/></svg>
<div class="t" style="left:1173.6px;top:541.5px;font-size:12.6px;color:#4d5056;-webkit-text-stroke:.25px #4d5056">Overdue</div>
<div class="t" style="left:1173.6px;top:560.4px;font-size:12.3px;color:#8d9096;">202 days ago</div>
<svg style="left:1358.8px;top:546.8px" width="19" height="19" viewBox="0 0 19 19"><circle cx="9.500" cy="9.500" r="9.300" fill="#77797d"/><path d="M9.500 4.500v5.300l3.300 2" fill="none" stroke="#fff" stroke-width="1.900" stroke-linecap="round"/></svg>
<div class="t" style="left:1560.5px;top:550.6px;font-size:13.35px;color:#3a86c8;">Schedule payment</div>
<div style="left:1678.7px;top:550.5px;width:0.8px;height:13.0px;background:#e4e6ea"></div>
<svg style="left:1685.3px;top:553.8px" width="11" height="7" viewBox="0 0 11 7"><path d="M1 1l4.500 4.500L10 1" fill="none" stroke="#55585e" stroke-width="1.500"/></svg>
<div style="left:306px;top:634.1px;width:1402px;height:1.0px;background:#e6e8eb"></div>
<div style="left:315px;top:598.1px;width:19.3px;height:18.6px;border:1px solid #a9adb3;border-radius:3.500px;background:#fff"></div>
<div class="t" style="left:351.8px;top:602.3px;font-size:13.5px;color:#3a86c8;">John</div>
<div class="t" style="left:566px;top:602.6px;font-size:12.8px;color:#8d9096;">05/22/2025</div>
<div class="t" style="left:749.8px;top:602.8px;font-size:12.5px;color:#8d9096;">$4,000.00</div>
<div class="t" style="right:598.7px;top:602.4px;font-size:13px;font-weight:700;color:#55585e;">$4,000.00</div>
<svg style="left:1144.8px;top:598.6px" width="19" height="19" viewBox="0 0 19 19"><circle cx="9.500" cy="9.500" r="9.300" fill="#d96d0c"/><path d="M9.500 4.500v6.300" stroke="#fff" stroke-width="2.200" stroke-linecap="round"/><circle cx="9.500" cy="14" r="1.300" fill="#fff"/></svg>
<div class="t" style="left:1173.6px;top:593.3px;font-size:12.6px;color:#4d5056;-webkit-text-stroke:.25px #4d5056">Overdue</div>
<div class="t" style="left:1173.6px;top:612.2px;font-size:12.3px;color:#8d9096;">202 days ago</div>
<svg style="left:1358.8px;top:598.6px" width="19" height="19" viewBox="0 0 19 19"><circle cx="9.500" cy="9.500" r="9.300" fill="#77797d"/><path d="M9.500 4.500v5.300l3.300 2" fill="none" stroke="#fff" stroke-width="1.900" stroke-linecap="round"/></svg>
<div class="t" style="left:1560.5px;top:602.4px;font-size:13.35px;color:#3a86c8;">Schedule payment</div>
<div style="left:1678.7px;top:602.3px;width:0.8px;height:13.0px;background:#e4e6ea"></div>
<svg style="left:1685.3px;top:605.6px" width="11" height="7" viewBox="0 0 11 7"><path d="M1 1l4.500 4.500L10 1" fill="none" stroke="#55585e" stroke-width="1.500"/></svg>
<div style="left:306px;top:685.9px;width:1402px;height:1.0px;background:#e6e8eb"></div>
<div style="left:315px;top:650.0px;width:19.3px;height:18.6px;border:1px solid #a9adb3;border-radius:3.500px;background:#fff"></div>
<div class="t" style="left:351.8px;top:654.1px;font-size:13.5px;color:#3a86c8;">John</div>
<div class="t" style="left:566px;top:654.4px;font-size:12.8px;color:#8d9096;">05/23/2025</div>
<div class="t" style="left:749.8px;top:654.6px;font-size:12.5px;color:#8d9096;">$4,000.00</div>
<div class="t" style="right:598.7px;top:654.2px;font-size:13px;font-weight:700;color:#55585e;">$4,000.00</div>
<svg style="left:1144.8px;top:650.4px" width="19" height="19" viewBox="0 0 19 19"><circle cx="9.500" cy="9.500" r="9.300" fill="#d96d0c"/><path d="M9.500 4.500v6.300" stroke="#fff" stroke-width="2.200" stroke-linecap="round"/><circle cx="9.500" cy="14" r="1.300" fill="#fff"/></svg>
<div class="t" style="left:1173.6px;top:645.2px;font-size:12.6px;color:#4d5056;-webkit-text-stroke:.25px #4d5056">Overdue</div>
<div class="t" style="left:1173.6px;top:664.0px;font-size:12.3px;color:#8d9096;">201 days ago</div>
<svg style="left:1358.8px;top:650.4px" width="19" height="19" viewBox="0 0 19 19"><circle cx="9.500" cy="9.500" r="9.300" fill="#77797d"/><path d="M9.500 4.500v5.300l3.300 2" fill="none" stroke="#fff" stroke-width="1.900" stroke-linecap="round"/></svg>
<div class="t" style="left:1560.5px;top:654.2px;font-size:13.35px;color:#3a86c8;">Schedule payment</div>
<div style="left:1678.7px;top:654.1px;width:0.8px;height:13.0px;background:#e4e6ea"></div>
<svg style="left:1685.3px;top:657.4px" width="11" height="7" viewBox="0 0 11 7"><path d="M1 1l4.500 4.500L10 1" fill="none" stroke="#55585e" stroke-width="1.500"/></svg>
<div style="left:306px;top:737.8px;width:1402px;height:1.0px;background:#e6e8eb"></div>
<div style="left:315px;top:701.8px;width:19.3px;height:18.6px;border:1px solid #a9adb3;border-radius:3.500px;background:#fff"></div>
<div class="t" style="left:351.8px;top:706.0px;font-size:13.5px;color:#3a86c8;">John</div>
<div class="t" style="left:566px;top:706.3px;font-size:12.8px;color:#8d9096;">05/23/2025</div>
<div class="t" style="left:749.8px;top:706.5px;font-size:12.5px;color:#8d9096;">$4,000.00</div>
<div class="t" style="right:598.7px;top:706.1px;font-size:13px;font-weight:700;color:#55585e;">$4,000.00</div>
<svg style="left:1144.8px;top:702.3px" width="19" height="19" viewBox="0 0 19 19"><circle cx="9.500" cy="9.500" r="9.300" fill="#d96d0c"/><path d="M9.500 4.500v6.300" stroke="#fff" stroke-width="2.200" stroke-linecap="round"/><circle cx="9.500" cy="14" r="1.300" fill="#fff"/></svg>
<div class="t" style="left:1173.6px;top:697.0px;font-size:12.6px;color:#4d5056;-webkit-text-stroke:.25px #4d5056">Overdue</div>
<div class="t" style="left:1173.6px;top:715.9px;font-size:12.3px;color:#8d9096;">201 days ago</div>
<svg style="left:1358.8px;top:702.3px" width="19" height="19" viewBox="0 0 19 19"><circle cx="9.500" cy="9.500" r="9.300" fill="#77797d"/><path d="M9.500 4.500v5.300l3.300 2" fill="none" stroke="#fff" stroke-width="1.900" stroke-linecap="round"/></svg>
<div class="t" style="left:1560.5px;top:706.1px;font-size:13.35px;color:#3a86c8;">Schedule payment</div>
<div style="left:1678.7px;top:706.0px;width:0.8px;height:13.0px;background:#e4e6ea"></div>
<svg style="left:1685.3px;top:709.3px" width="11" height="7" viewBox="0 0 11 7"><path d="M1 1l4.500 4.500L10 1" fill="none" stroke="#55585e" stroke-width="1.500"/></svg>
<div style="left:306px;top:789.6px;width:1402px;height:1.0px;background:#e6e8eb"></div>
<div style="left:315px;top:753.7px;width:19.3px;height:18.6px;border:1px solid #a9adb3;border-radius:3.500px;background:#fff"></div>
<div class="t" style="left:351.8px;top:757.8px;font-size:13.5px;color:#3a86c8;">John</div>
<div class="t" style="left:566px;top:758.2px;font-size:12.8px;color:#8d9096;">05/29/2025</div>
<div class="t" style="left:749.8px;top:758.4px;font-size:12.5px;color:#8d9096;">$7,000.00</div>
<div class="t" style="right:598.7px;top:758.0px;font-size:13px;font-weight:700;color:#55585e;">$7,000.00</div>
<svg style="left:1144.8px;top:754.1px" width="19" height="19" viewBox="0 0 19 19"><circle cx="9.500" cy="9.500" r="9.300" fill="#d96d0c"/><path d="M9.500 4.500v6.300" stroke="#fff" stroke-width="2.200" stroke-linecap="round"/><circle cx="9.500" cy="14" r="1.300" fill="#fff"/></svg>
<div class="t" style="left:1173.6px;top:748.9px;font-size:12.6px;color:#4d5056;-webkit-text-stroke:.25px #4d5056">Overdue</div>
<div class="t" style="left:1173.6px;top:767.7px;font-size:12.3px;color:#8d9096;">195 days ago</div>
<svg style="left:1358.8px;top:754.1px" width="19" height="19" viewBox="0 0 19 19"><circle cx="9.500" cy="9.500" r="9.300" fill="#77797d"/><path d="M9.500 4.500v5.300l3.300 2" fill="none" stroke="#fff" stroke-width="1.900" stroke-linecap="round"/></svg>
<div class="t" style="left:1560.5px;top:757.9px;font-size:13.35px;color:#3a86c8;">Schedule payment</div>
<div style="left:1678.7px;top:757.9px;width:0.8px;height:13.0px;background:#e4e6ea"></div>
<svg style="left:1685.3px;top:761.1px" width="11" height="7" viewBox="0 0 11 7"><path d="M1 1l4.500 4.500L10 1" fill="none" stroke="#55585e" stroke-width="1.500"/></svg>
<div style="left:306px;top:841.5px;width:1402px;height:1.0px;background:#e6e8eb"></div>
<div style="left:315px;top:805.5px;width:19.3px;height:18.6px;border:1px solid #a9adb3;border-radius:3.500px;background:#fff"></div>
<div class="t" style="left:351.8px;top:809.7px;font-size:13.5px;color:#3a86c8;">John</div>
<div class="t" style="left:566px;top:810.0px;font-size:12.8px;color:#8d9096;">05/29/2025</div>
<div class="t" style="left:749.8px;top:810.2px;font-size:12.5px;color:#8d9096;">$7,000.00</div>
<div class="t" style="right:598.7px;top:809.8px;font-size:13px;font-weight:700;color:#55585e;">$7,000.00</div>
<svg style="left:1144.8px;top:806.0px" width="19" height="19" viewBox="0 0 19 19"><circle cx="9.500" cy="9.500" r="9.300" fill="#d96d0c"/><path d="M9.500 4.500v6.300" stroke="#fff" stroke-width="2.200" stroke-linecap="round"/><circle cx="9.500" cy="14" r="1.300" fill="#fff"/></svg>
<div class="t" style="left:1173.6px;top:800.7px;font-size:12.6px;color:#4d5056;-webkit-text-stroke:.25px #4d5056">Overdue</div>
<div class="t" style="left:1173.6px;top:819.6px;font-size:12.3px;color:#8d9096;">195 days ago</div>
<svg style="left:1358.8px;top:806.0px" width="19" height="19" viewBox="0 0 19 19"><circle cx="9.500" cy="9.500" r="9.300" fill="#77797d"/><path d="M9.500 4.500v5.300l3.300 2" fill="none" stroke="#fff" stroke-width="1.900" stroke-linecap="round"/></svg>
<div class="t" style="left:1560.5px;top:809.8px;font-size:13.35px;color:#3a86c8;">Schedule payment</div>
<div style="left:1678.7px;top:809.7px;width:0.8px;height:13.0px;background:#e4e6ea"></div>
<svg style="left:1685.3px;top:813.0px" width="11" height="7" viewBox="0 0 11 7"><path d="M1 1l4.500 4.500L10 1" fill="none" stroke="#55585e" stroke-width="1.500"/></svg></div>
<div style="left:306px;top:810.3px;width:1409px;height:1.5px;background:#b4b7bc"></div>
<div style="left:1380px;top:600px;width:380px;height:380px;border-radius:50%;background:#fff;filter:blur(2px)"></div>
<div style="left:1689.7px;top:311px;width:37.3px;height:94.3px;border-radius:9px 0 0 9px;background:#2474c2;box-shadow:-1px 1px 3px rgba(0,0,0,.25)"></div>
<svg style="left:1701.3px;top:321.0px" width="16" height="10" viewBox="0 0 16 10"><circle cx="1.5" cy="1.5" r="1.300" fill="#7db2e4"/><circle cx="1.5" cy="8.0" r="1.300" fill="#7db2e4"/><circle cx="7.7" cy="1.5" r="1.300" fill="#7db2e4"/><circle cx="7.7" cy="8.0" r="1.300" fill="#7db2e4"/><circle cx="13.9" cy="1.5" r="1.300" fill="#7db2e4"/><circle cx="13.9" cy="8.0" r="1.300" fill="#7db2e4"/></svg>
<div class="t" style="left:1679px;top:358px;width:60px;height:20px;line-height:20px;text-align:center;font-size:15px;font-weight:700;color:#fff;transform:rotate(-90deg)">Demo</div>
</div>
<svg style="position:absolute;left:1480px;top:690px" width="380" height="380" viewBox="1480 690 380 380">
<defs>
<clipPath id="cc"><circle cx="1663.500" cy="873" r="163"/></clipPath>
<filter id="b1" x="-20%" y="-20%" width="140%" height="140%"><feGaussianBlur stdDeviation="1.600"/></filter>
<filter id="b3" x="-20%" y="-20%" width="140%" height="140%"><feGaussianBlur stdDeviation="4"/></filter>
<filter id="b6" x="-30%" y="-30%" width="160%" height="160%"><feGaussianBlur stdDeviation="8"/></filter>
<linearGradient id="pg" x1="0" x2="1" y1="0" y2="0"><stop offset="0" stop-color="#6c6048"/><stop offset=".18" stop-color="#94886c"/><stop offset=".36" stop-color="#bcb8b0"/><stop offset=".62" stop-color="#a8a49d"/><stop offset="1" stop-color="#7d776d"/></linearGradient>
<radialGradient id="fg" cx=".5" cy=".45" r=".6"><stop offset="0" stop-color="#e6c0ac"/><stop offset=".6" stop-color="#d4a892"/><stop offset="1" stop-color="#ad826c"/></radialGradient>
<radialGradient id="bg2" cx=".5" cy=".55" r=".58"><stop offset="0" stop-color="#aeaeb0"/><stop offset=".28" stop-color="#959496"/><stop offset=".52" stop-color="#5e5650"/><stop offset=".8" stop-color="#2e2622"/></radialGradient>
</defs>
<circle cx="1669.500" cy="878.500" r="177" fill="#fff"/>
<g clip-path="url(#cc)">
<rect x="1490" y="700" width="350" height="350" fill="#cbc7c2"/>
<rect x="1490" y="815" width="120" height="140" fill="#c2c6cc" filter="url(#b6)"/>
<rect x="1740" y="815" width="100" height="140" fill="#d6d3cf" filter="url(#b6)"/>
<g filter="url(#b1)"><rect x="1490" y="700" width="350" height="112" fill="url(#pg)"/>
<rect x="1560" y="705" width="230" height="40" fill="#b9b6b0" opacity=".75"/>
<rect x="1600" y="745" width="210" height="66" fill="#9a958d" opacity=".7"/>
<path d="M1490 812l40-60 50-30 30 20-20 70z" fill="#7a6c52" opacity=".8"/><path d="M1720 812l40-50 70-10v60z" fill="#5e5950" opacity=".7"/><rect x="1568" y="740" width="9" height="70" fill="#c9c7c0" opacity=".7"/><rect x="1545" y="760" width="6" height="50" fill="#b9b29c" opacity=".7"/>
<circle cx="1640" cy="717" r="2.5" fill="#e9e7e2" opacity=".85"/>
<circle cx="1623" cy="715" r="2.5" fill="#e9e7e2" opacity=".85"/>
<circle cx="1783" cy="750" r="3.4" fill="#e9e7e2" opacity=".85"/>
<circle cx="1637" cy="738" r="2.2" fill="#e9e7e2" opacity=".85"/>
<circle cx="1626" cy="717" r="2.0" fill="#e9e7e2" opacity=".85"/>
<circle cx="1785" cy="752" r="3.5" fill="#e9e7e2" opacity=".85"/>
<circle cx="1758" cy="721" r="2.3" fill="#e9e7e2" opacity=".85"/>
<circle cx="1722" cy="747" r="3.6" fill="#e9e7e2" opacity=".85"/>
<circle cx="1775" cy="716" r="3.0" fill="#e9e7e2" opacity=".85"/>
<circle cx="1731" cy="736" r="1.9" fill="#e9e7e2" opacity=".85"/>
<circle cx="1689" cy="716" r="3.8" fill="#e9e7e2" opacity=".85"/>
<circle cx="1772" cy="738" r="2.3" fill="#e9e7e2" opacity=".85"/>
<circle cx="1781" cy="739" r="3.7" fill="#e9e7e2" opacity=".85"/>
<circle cx="1768" cy="736" r="2.5" fill="#e9e7e2" opacity=".85"/>
<circle cx="1716" cy="733" r="1.9" fill="#e9e7e2" opacity=".85"/>
<circle cx="1654" cy="751" r="1.6" fill="#e9e7e2" opacity=".85"/>
<circle cx="1600" cy="742" r="2.2" fill="#e9e7e2" opacity=".85"/>
<circle cx="1702" cy="735" r="2.4" fill="#e9e7e2" opacity=".85"/>
<circle cx="1799" cy="721" r="2.5" fill="#e9e7e2" opacity=".85"/>
<circle cx="1633" cy="742" r="2.2" fill="#e9e7e2" opacity=".85"/>
<circle cx="1665" cy="748" r="2.3" fill="#e9e7e2" opacity=".85"/>
<circle cx="1707" cy="755" r="1.8" fill="#e9e7e2" opacity=".85"/>
<circle cx="1603" cy="723" r="3.4" fill="#e9e7e2" opacity=".85"/>
<circle cx="1719" cy="723" r="2.3" fill="#e9e7e2" opacity=".85"/>
<circle cx="1627" cy="734" r="1.6" fill="#e9e7e2" opacity=".85"/>
<circle cx="1736" cy="755" r="3.9" fill="#e9e7e2" opacity=".85"/>
<rect x="1714" y="739" width="5" height="10" fill="#4d4a46" opacity=".6"/>
<rect x="1636" y="739" width="5" height="22" fill="#4d4a46" opacity=".6"/>
<rect x="1657" y="738" width="5" height="20" fill="#4d4a46" opacity=".6"/>
<rect x="1728" y="717" width="5" height="13" fill="#4d4a46" opacity=".6"/>
<rect x="1663" y="712" width="5" height="16" fill="#4d4a46" opacity=".6"/>
<rect x="1753" y="719" width="5" height="10" fill="#4d4a46" opacity=".6"/>
<rect x="1593" y="713" width="5" height="23" fill="#4d4a46" opacity=".6"/>
<rect x="1648" y="717" width="5" height="12" fill="#4d4a46" opacity=".6"/>
<rect x="1757" y="722" width="5" height="13" fill="#4d4a46" opacity=".6"/>
<rect x="1595" y="710" width="5" height="13" fill="#4d4a46" opacity=".6"/>
<rect x="1490" y="810" width="350" height="4" fill="#2f2a26"/></g>
<g filter="url(#b1)"><path d="M1542 940v-62q0-32 36-32h30v94zM1798 945v-62q0-30-34-34h-62v96z" fill="#1d1d1f"/>
<path d="M1552 930v-50q0-22 22-24" fill="none" stroke="#3c3c40" stroke-width="5" opacity=".7"/><path d="M1745 860q-8 40 0 80" fill="none" stroke="#38383c" stroke-width="6" opacity=".7"/></g>
<path d="M1490 1060v-80q10-24 34-34l40-14 40-14h100l50 16 40 16q30 10 46 34v76z" fill="#19191b" filter="url(#b1)"/>
<path d="M1600 930q50 40 110 0l-10 60h-90z" fill="#222225" filter="url(#b3)"/>
<path d="M1566 860C1560 800 1570 762 1608 748C1640 739 1682 741 1702 756C1724 776 1724 822 1718 862L1704 862C1707 830 1705 800 1690 787C1660 777 1630 777 1604 787C1588 800 1584 830 1584 862Z" fill="#2b2523" filter="url(#b1)"/>
<path d="M1600 775q40-22 92-2" fill="none" stroke="#4a423f" stroke-width="5" opacity=".6" filter="url(#b3)"/>
<path d="M1579 850C1579 812 1589 791 1606 785C1630 779 1665 779 1690 786C1707 794 1713 815 1713 850L1709 896C1700 946 1680 952 1650 952C1614 952 1594 946 1584 896Z" fill="url(#fg)" filter="url(#b1)"/>
<ellipse cx="1645" cy="800" rx="30" ry="10" fill="#ecc8b4" opacity=".7" filter="url(#b3)"/>
<ellipse cx="1578" cy="870" rx="5" ry="12" fill="#b98a72" filter="url(#b1)"/>
<path d="M1579 878C1581 930 1595 966 1615 979C1632 993 1664 993 1684 979C1704 963 1713 925 1715 878L1712 890C1706 905 1696 911 1686 905C1672 893 1640 893 1626 905C1614 911 1596 905 1584 888Z" fill="url(#bg2)" filter="url(#b1)"/>
<ellipse cx="1653" cy="952" rx="24" ry="30" fill="#b6b6b8" filter="url(#b6)" opacity=".75"/>
<ellipse cx="1655" cy="921" rx="11" ry="3" fill="#8d5a54" filter="url(#b1)"/>
<g filter="url(#b1)"><path d="M1600 842q18-9 40-2l-1 5q-20-5-38 2z" fill="#2a2220"/><path d="M1670 840q20-8 38 2l-1 5q-18-6-36-2z" fill="#2a2220"/>
<ellipse cx="1624" cy="855" rx="8" ry="3.500" fill="#4a3530"/><ellipse cx="1686" cy="854" rx="8" ry="3.500" fill="#4a3530"/>
<path d="M1652 858q-6 26-8 34 10 5 20 0-4-10-6-34z" fill="#e8bea8" opacity=".8"/></g>
</g></svg>
</body></html>
